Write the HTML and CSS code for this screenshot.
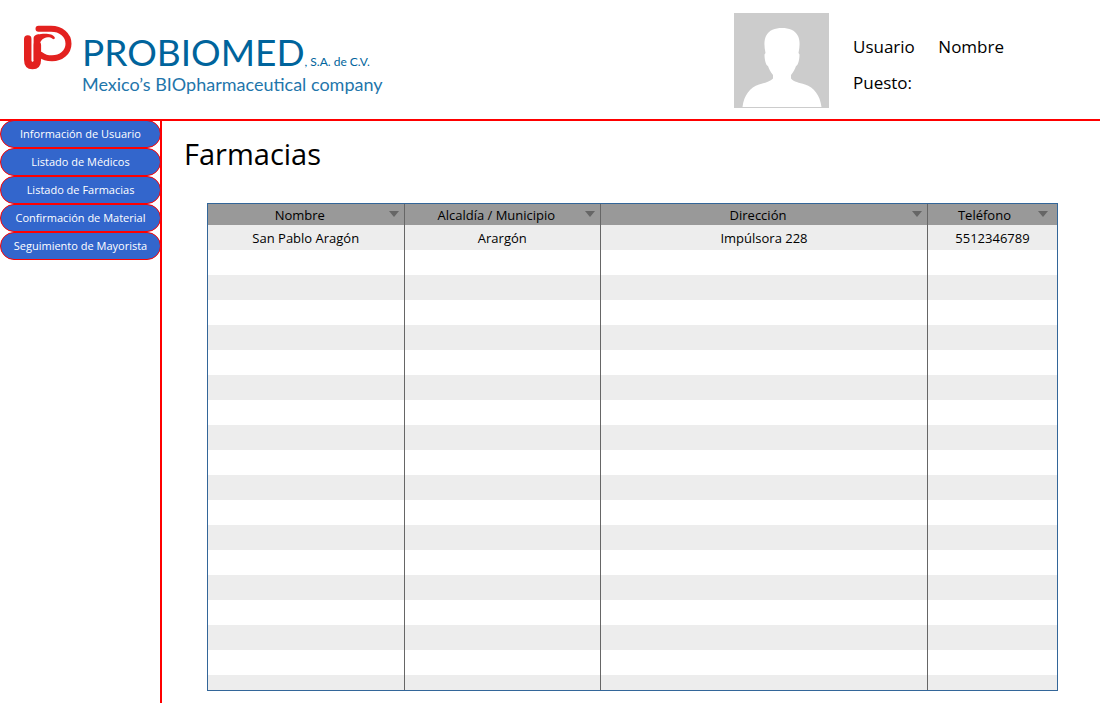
FILE: index.html
```html
<!DOCTYPE html>
<html lang="es">
<head>
<meta charset="utf-8">
<meta name="viewport" content="width=device-width, initial-scale=1">
<title>Farmacias</title>
<link rel="stylesheet" href="styles.css">
</head>
<body>
<header class="header">
  <div class="brand">
    <svg class="brand-mark" viewBox="0 0 50 46" aria-hidden="true">
      <g fill="none" stroke="#e3211f" stroke-linecap="round" stroke-linejoin="round">
        <path d="M15.500 3.800H28C38 3.800 45.500 10 45.500 18.700S38 33.300 29 33.300C24 33.300 20.500 32.200 18 30" stroke-width="6"/>
        <path d="M4.800 14V34.500Q4.800 40.500 9.500 40.500Q14.300 40.500 14.300 34.500V20" stroke-width="7.600"/>
      </g>
      <path fill="#e3211f" d="M10.500 13C11 10 14 9.300 18 9C24 8.300 30 9 31.800 12.500C32 14.200 30.500 14.600 29.500 13.800C26 11.300 21 12 18 16C15.500 19.500 15.200 25 18 29.500L18 34L10.500 35Z"/>
      <path d="M9.500 9.500V36" stroke="#fff" stroke-width="1.500"/>
    </svg>
    <div class="brand-text">
      <div class="brand-line"><span class="brand-name">PROBIOMED</span><span class="brand-legal">, S.A. de C.V.</span></div>
      <div class="brand-tagline">Mexico’s BIOpharmaceutical company</div>
    </div>
  </div>
  <div class="profile">
    <svg class="avatar" viewBox="0 0 95 95" role="img" aria-label="Foto de usuario">
      <path fill="#ccc" d="M0 0H95V95H0Z"/>
      <path fill="#fff" d="M8.500 94C10 82 16 74.500 25 71.500C31 69.500 36 69 39 65.500V62C36.500 59 35 56 34 53C31.500 52 30.500 46 30.500 41.500L31.500 40C30 33 30 27 32 23C35 17 41 15 48 15C55 15 61 17 64 23C66 27 66 33 64.500 40L65.500 41.500C65.500 46 64.500 52 62 53C61 56 59.500 59 57 62V65.500C60 69 65 69.500 71 71.500C80 74.500 86 82 87.500 94Z"/>
    </svg>
    <div class="profile-text">
      <div class="profile-row"><span>Usuario</span><span>Nombre</span></div>
      <div class="profile-row"><span>Puesto:</span></div>
    </div>
  </div>
</header>
<div class="layout">
  <nav class="sidebar" aria-label="Principal">
    <button class="nav-button" type="button">Información de Usuario</button>
    <button class="nav-button" type="button">Listado de Médicos</button>
    <button class="nav-button" type="button">Listado de Farmacias</button>
    <button class="nav-button" type="button">Confirmación de Material</button>
    <button class="nav-button" type="button">Seguimiento de Mayorista</button>
  </nav>
  <main class="content">
    <h1 class="title">Farmacias</h1>
    <div class="grid-frame">
      <table class="grid">
        <colgroup><col class="col-name"><col class="col-town"><col class="col-address"><col class="col-phone"></colgroup>
        <thead>
          <tr>
            <th scope="col"><button class="sort" type="button"><span class="sort-label">Nombre</span><span class="sort-arrow"></span></button></th>
            <th scope="col"><button class="sort" type="button"><span class="sort-label">Alcaldía / Municipio</span><span class="sort-arrow"></span></button></th>
            <th scope="col"><button class="sort" type="button"><span class="sort-label">Dirección</span><span class="sort-arrow"></span></button></th>
            <th scope="col"><button class="sort sort-last" type="button"><span class="sort-label">Teléfono</span><span class="sort-arrow"></span></button></th>
          </tr>
        </thead>
        <tbody>
          <tr><td>San Pablo Aragón</td><td>Arargón</td><td>Impúlsora 228</td><td>5512346789</td></tr>
          <tr><td></td><td></td><td></td><td></td></tr>
          <tr><td></td><td></td><td></td><td></td></tr>
          <tr><td></td><td></td><td></td><td></td></tr>
          <tr><td></td><td></td><td></td><td></td></tr>
          <tr><td></td><td></td><td></td><td></td></tr>
          <tr><td></td><td></td><td></td><td></td></tr>
          <tr><td></td><td></td><td></td><td></td></tr>
          <tr><td></td><td></td><td></td><td></td></tr>
          <tr><td></td><td></td><td></td><td></td></tr>
          <tr><td></td><td></td><td></td><td></td></tr>
          <tr><td></td><td></td><td></td><td></td></tr>
          <tr><td></td><td></td><td></td><td></td></tr>
          <tr><td></td><td></td><td></td><td></td></tr>
          <tr><td></td><td></td><td></td><td></td></tr>
          <tr><td></td><td></td><td></td><td></td></tr>
          <tr><td></td><td></td><td></td><td></td></tr>
          <tr><td></td><td></td><td></td><td></td></tr>
          <tr><td></td><td></td><td></td><td></td></tr>
        </tbody>
      </table>
    </div>
  </main>
</div>
</body>
</html>
```
FILE: styles.css
```css
* {
  box-sizing: border-box;
}

body {
  display: flex;
  flex-direction: column;
  height: 100vh;
  margin: 0;
  background: #fff;
  color: #000;
  font-family: "Segoe UI", "Open Sans", "Noto Sans", sans-serif;
  font-size: 13px;
}

.header {
  display: flex;
  justify-content: space-between;
  padding: 13px 96px 11px 23px;
  border-bottom: 2px solid #f00;
}

.brand {
  display: flex;
  gap: 9px;
  padding-top: 12px;
}

.brand-mark {
  width: 50px;
  height: 46px;
}

.brand-text {
  padding-top: 7px;
  color: #00649c;
  font-family: Lato, sans-serif;
  white-space: nowrap;
}

.brand-name {
  font-size: 37px;
  line-height: 40px;
}

.brand-legal {
  font-size: 12px;
}

.brand-tagline {
  color: #1f76ab;
  font-size: 18px;
  line-height: 24px;
}

.profile {
  display: flex;
  gap: 24px;
}

.avatar {
  width: 95px;
  height: 95px;
}

.profile-text {
  display: flex;
  flex-direction: column;
  gap: 12px;
  width: 151px;
  padding-top: 22px;
  font-size: 17px;
  line-height: 24px;
}

.profile-row {
  display: flex;
  justify-content: space-between;
}

.layout {
  display: flex;
  flex: 1;
  min-height: 0;
}

.sidebar {
  display: flex;
  flex-direction: column;
  width: 162px;
  border-right: 2px solid #f00;
}

.nav-button {
  height: 28px;
  margin-right: -1px;
  padding: 0;
  border: 1px solid #f00;
  border-radius: 14px;
  background: #36c;
  color: #fff;
  font-family: inherit;
  font-size: 11px;
  line-height: 24px;
  white-space: nowrap;
}

.nav-button:first-child {
  margin-top: -1px;
}

.content {
  display: flex;
  flex: 1;
  flex-direction: column;
  min-width: 0;
  padding: 12px 42px 12px 22px;
}

.title {
  margin: 0;
  font-size: 29px;
  font-weight: 400;
  line-height: 42px;
}

.grid-frame {
  flex: 1;
  min-height: 0;
  margin: 28px 0 0 23px;
  overflow: hidden;
  border: 1px solid #369;
}

.grid {
  width: 100%;
  table-layout: fixed;
  border-collapse: separate;
  border-spacing: 0;
}

.col-name,
.col-town {
  width: 23.15%;
}

.col-address {
  width: 38.5%;
}

.grid th,
.grid td {
  padding: 0;
  border-right: 1px solid #666;
  font-weight: 400;
  text-align: center;
}

.grid th:last-child,
.grid td:last-child {
  border-right: 0;
}

.grid th {
  height: 21px;
  background: #999;
}

.grid td {
  height: 25px;
}

.grid tbody tr:nth-child(odd) {
  background: #ededed;
}

.sort {
  display: flex;
  align-items: center;
  width: 100%;
  height: 21px;
  padding: 0 5px 0 3px;
  border: 0;
  background: none;
  color: inherit;
  font: inherit;
}

.sort-last {
  padding-right: 9px;
}

.sort-label {
  flex: 1;
}

.sort-arrow {
  margin-bottom: 2px;
  border: 5px solid transparent;
  border-top: 6px solid #666;
  border-bottom: 0;
}
```
